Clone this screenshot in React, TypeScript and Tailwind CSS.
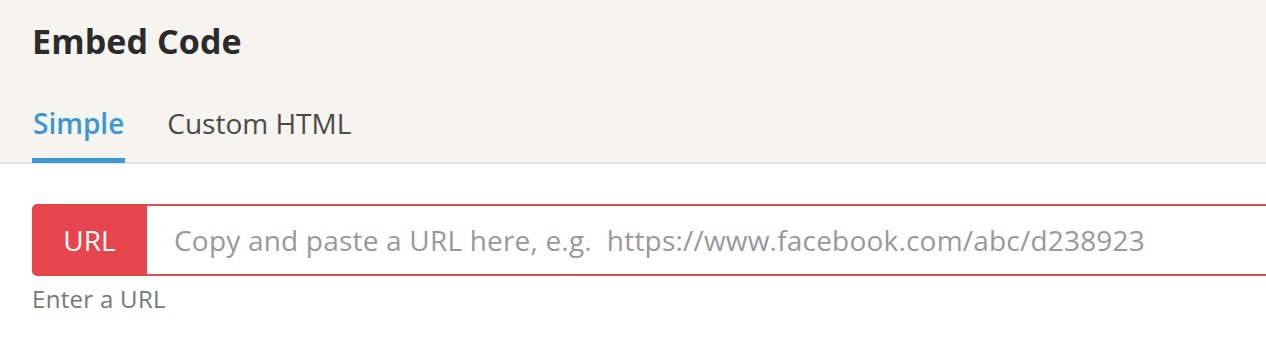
import React from "react";

export default function App() {
  return (
    <div className="w-[1266px] h-[346px] overflow-hidden bg-white font-['Open_Sans',sans-serif]">
      <div className="bg-[#f5f4ef] border-b-2 border-[#e3e3e1] h-[164px] flex flex-col px-[32px]">
        <h1 className="mt-[21px] text-[34px] leading-[40px] font-bold text-[#2b2b2b] tracking-[0.1px]">Embed Code</h1>
        <div className="mt-auto flex gap-[42px]">
          <div className="flex flex-col">
            <span className="text-[28px] leading-[32px] font-semibold text-[#3d97d3] px-[1px]">Simple</span>
            <div className="mt-[19px] h-[5px] bg-[#3d97d3] -mb-[1px] relative" />
          </div>
          <div className="flex flex-col">
            <span className="text-[28px] leading-[32px] text-[#4a4a4a]">Custom HTML</span>
          </div>
        </div>
      </div>
      <div className="px-[32px] pt-[40px]">
        <div className="flex h-[72px] w-[1300px]">
          <div className="w-[115px] bg-[#e6454e] rounded-l-[5px] flex items-center justify-center text-white text-[28px]">URL</div>
          <div className="flex-1 border-2 border-l-0 border-[#dc5052] flex items-center pl-[27px] text-[28px] tracking-[0.2px] text-[#999999] whitespace-pre">
            Copy and paste a URL here, e.g.  https://www.facebook.com/abc/d238923
          </div>
        </div>
        <div className="mt-[9px] text-[24px] leading-[28px] tracking-[0.3px] text-[#777777]">Enter a URL</div>
      </div>
    </div>
  );
}
